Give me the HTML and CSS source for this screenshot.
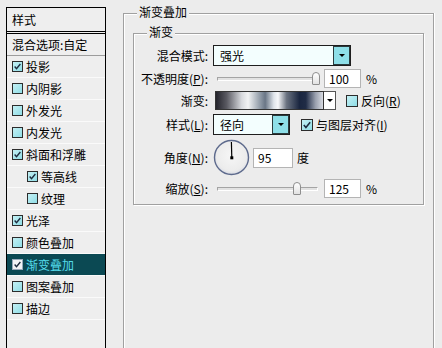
FILE: index.html
```html
<!DOCTYPE html>
<html lang="zh-CN">
<head>
  <meta charset="UTF-8">
  <title>图层样式 - 渐变叠加</title>
  <link rel="stylesheet" href="styles.css">
</head>
<body>
  <div class="dialog">
    <div class="style-list">
      <div class="list-head">样式</div>
      <div class="list-blend">混合选项:自定</div>
      <div class="list-item"><span class="check on"><svg viewBox="0 0 11 11"><path d="M2 5.5 L4.3 8.2 L9 2.5"/></svg></span>投影</div>
      <div class="list-item"><span class="check"></span>内阴影</div>
      <div class="list-item"><span class="check"></span>外发光</div>
      <div class="list-item"><span class="check"></span>内发光</div>
      <div class="list-item"><span class="check on"><svg viewBox="0 0 11 11"><path d="M2 5.5 L4.3 8.2 L9 2.5"/></svg></span>斜面和浮雕</div>
      <div class="list-item sub"><span class="check on"><svg viewBox="0 0 11 11"><path d="M2 5.5 L4.3 8.2 L9 2.5"/></svg></span>等高线</div>
      <div class="list-item sub"><span class="check"></span>纹理</div>
      <div class="list-item"><span class="check on"><svg viewBox="0 0 11 11"><path d="M2 5.5 L4.3 8.2 L9 2.5"/></svg></span>光泽</div>
      <div class="list-item"><span class="check"></span>颜色叠加</div>
      <div class="list-item active"><span class="check on"><svg viewBox="0 0 11 11"><path d="M2 5.5 L4.3 8.2 L9 2.5"/></svg></span>渐变叠加</div>
      <div class="list-item"><span class="check"></span>图案叠加</div>
      <div class="list-item"><span class="check"></span>描边</div>
    </div>

    <div class="settings">
      <span class="group-title">渐变叠加</span>
      <div class="group">
        <span class="group-title">渐变</span>

        <div class="row row-mode">
          <span class="label">混合模式:</span>
          <div class="select mode-select">
            <span class="select-text">强光</span>
            <span class="select-btn"><i class="arrow"></i></span>
          </div>
        </div>

        <div class="row row-opacity">
          <span class="label">不透明度(<u>P</u>):</span>
          <div class="slider">
            <div class="track"></div>
            <span class="thumb" style="left: 99px"></span>
          </div>
          <span class="num">100</span>
          <span class="unit">%</span>
        </div>

        <div class="row row-gradient">
          <span class="label">渐变:</span>
          <div class="swatch"></div>
          <span class="swatch-btn"><i class="arrow"></i></span>
          <span class="check box reverse"></span>
          <span class="check-label">反向(<u>R</u>)</span>
        </div>

        <div class="row row-style">
          <span class="label">样式(<u>L</u>):</span>
          <div class="select style-select">
            <span class="select-text">径向</span>
            <span class="select-btn"><i class="arrow"></i></span>
          </div>
          <span class="check box on align"><svg viewBox="0 0 11 11"><path d="M2 5.5 L4.3 8.2 L9 2.5"/></svg></span>
          <span class="check-label">与图层对齐(<u>I</u>)</span>
        </div>

        <div class="row row-angle">
          <span class="label">角度(<u>N</u>):</span>
          <svg class="dial" viewBox="0 0 37 37" width="37" height="37">
            <defs>
              <radialGradient id="dialFill" cx="50%" cy="45%" r="55%">
                <stop offset="0%" stop-color="#f6f6f6"/>
                <stop offset="80%" stop-color="#ececec"/>
                <stop offset="100%" stop-color="#d8dbe4"/>
              </radialGradient>
            </defs>
            <circle cx="18.5" cy="18.5" r="17" fill="url(#dialFill)" stroke="#5d6a8c" stroke-width="1.4"/>
            <line x1="18.4" y1="3" x2="18.8" y2="18.5" stroke="#000" stroke-width="1.2"/>
            <rect x="17.3" y="17.3" width="3" height="3" fill="#000"/>
          </svg>
          <span class="num angle-num">95</span>
          <span class="unit deg">度</span>
        </div>

        <div class="row row-scale">
          <span class="label">缩放(<u>S</u>):</span>
          <div class="slider">
            <div class="track"></div>
            <span class="thumb" style="left: 80px"></span>
          </div>
          <span class="num">125</span>
          <span class="unit">%</span>
        </div>
      </div>
    </div>
  </div>
</body>
</html>
```

FILE: styles.css
```css
* { box-sizing: border-box; }
body {
  margin: 0;
  background: #ececec;
  font-family: "Noto Sans CJK SC", "Liberation Sans", sans-serif;
  font-size: 12px;
  color: #000;
}
.dialog {
  display: flex;
  height: 348px;
  overflow: hidden;
}

/* left list */
.style-list {
  margin: 7px 0 0 6px;
  width: 100px;
  border: 1px solid #000;
  border-bottom: none;
  background: #eeeeee;
}
.list-head {
  height: 26px;
  padding-left: 5px;
  line-height: 23px;
  border-bottom: 3px double #000;
}
.list-blend {
  height: 22px;
  padding-left: 5px;
  line-height: 21px;
  border-bottom: 1px solid #9c9c9c;
}
.list-item {
  height: 22px;
  display: flex;
  align-items: center;
  padding-left: 5px;
  border-bottom: 1px solid #fafafa;
}
.list-item.sub { padding-left: 20px; }
.list-item.active {
  background: #0b4953;
  color: #55dceb;
}
.check {
  width: 11px;
  height: 11px;
  margin-right: 3px;
  border: 1px solid #2c2c2c;
  background: linear-gradient(135deg, #c4f0f4, #90dde6);
  display: inline-flex;
}
.check svg {
  width: 100%;
  height: 100%;
}
.check svg path {
  fill: none;
  stroke: #1d2b3e;
  stroke-width: 1.7;
}
.list-item.active .check {
  background: #f2f4f6;
  border-color: #9ab;
}

/* right settings */
.settings {
  position: relative;
  margin: 13px 0 0 17px;
  width: 311px;
  border: 1px solid #a0a0a0;
  border-bottom: none;
  box-shadow: inset 1px 1px 0 #fff, 1px 0 0 #fff;
  padding: 19px 0 0 9px;
}
.group {
  position: relative;
  width: 291px;
  height: 172px;
  border: 1px solid #a0a0a0;
  box-shadow: inset 1px 1px 0 #fff, 1px 1px 0 #fff;
  padding-top: 11px;
}
.group-title {
  position: absolute;
  top: -10px;
  left: 13px;
  padding: 0 2px;
  line-height: 16px;
  background: #ececec;
}

.row {
  display: flex;
  align-items: center;
}
.label {
  width: 74px;
  margin-right: 5px;
  text-align: right;
  white-space: nowrap;
}
.row-mode { height: 21px; }
.row-opacity { height: 19px; margin-top: 3px; }
.row-gradient { height: 19px; margin-top: 3px; }
.row-style { height: 21px; margin-top: 4px; }
.row-angle { height: 37px; margin-top: 4px; }
.row-scale { height: 19px; margin-top: 3px; }

/* select boxes */
.select {
  height: 21px;
  display: flex;
  border: 1px solid #1e1e1e;
  background: #f3fefe;
}
.mode-select { width: 138px; }
.style-select { width: 77px; }
.select-text {
  flex: 1;
  padding-left: 6px;
  line-height: 19px;
}
.select-btn {
  width: 17px;
  border: 1px solid #2a3a3c;
  background: #8edfe8;
  display: flex;
  align-items: center;
  justify-content: center;
}
.arrow {
  width: 0;
  height: 0;
  border-left: 3px solid transparent;
  border-right: 3px solid transparent;
  border-top: 3px solid #000;
}

/* sliders */
.slider {
  position: relative;
  width: 109px;
  height: 19px;
  display: flex;
  align-items: center;
}
.track {
  flex: 1;
  margin: 0 4px;
  height: 4px;
  border: 1px solid #a4a4a4;
  border-right-color: #fff;
  border-bottom-color: #fff;
  background: #e2e2e2;
}
.thumb {
  position: absolute;
  top: 3px;
  width: 8px;
  height: 13px;
  border: 1px solid #8e8e8e;
  border-radius: 4px 4px 1px 1px;
  background: linear-gradient(#ffffff, #e2e2e2);
}
.num {
  width: 37px;
  height: 19px;
  margin-left: 2px;
  padding-left: 4px;
  line-height: 17px;
  border: 1px solid #b4b4b4;
  background: #fff;
}
.unit { margin-left: 5px; }

/* gradient swatch */
.swatch {
  width: 109px;
  height: 19px;
  margin-left: 2px;
  border: 1px solid #333;
  background: linear-gradient(90deg, #24242c 0%, #5a5a62 10%, #d8dade 24%, #f2f3f4 30%, #8a95a2 42%, #6a7686 46%, #dfe4ea 54%, #f7f8fa 58%, #6a7280 66%, #1a2640 78%, #202c46 84%, #9aa0ae 93%, #d8dbe2 100%);
}
.swatch-btn {
  width: 12px;
  height: 19px;
  border: 1px solid #555;
  border-left: none;
  background: #fff;
  display: flex;
  align-items: center;
  justify-content: center;
}
.check.box {
  width: 12px;
  height: 12px;
  margin-right: 0;
}
.reverse { margin-left: 10px; }
.align { margin-left: 11px; }
.check-label { margin-left: 3px; }

/* angle */
.dial { display: block; }
.angle-num {
  width: 40px;
  height: 20px;
  margin-left: 3px;
}
.deg { margin-left: 4px; }
```
